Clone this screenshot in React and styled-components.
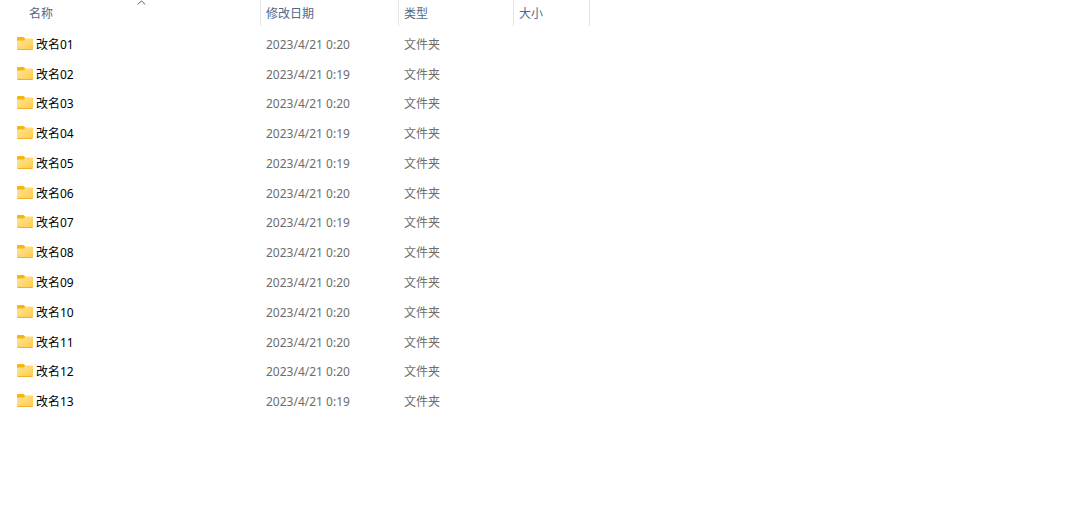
import styled, { createGlobalStyle } from 'styled-components'

const folders = [
  { name: '改名01', date: '2023/4/21 0:20' },
  { name: '改名02', date: '2023/4/21 0:19' },
  { name: '改名03', date: '2023/4/21 0:20' },
  { name: '改名04', date: '2023/4/21 0:19' },
  { name: '改名05', date: '2023/4/21 0:19' },
  { name: '改名06', date: '2023/4/21 0:20' },
  { name: '改名07', date: '2023/4/21 0:19' },
  { name: '改名08', date: '2023/4/21 0:20' },
  { name: '改名09', date: '2023/4/21 0:20' },
  { name: '改名10', date: '2023/4/21 0:20' },
  { name: '改名11', date: '2023/4/21 0:20' },
  { name: '改名12', date: '2023/4/21 0:20' },
  { name: '改名13', date: '2023/4/21 0:19' },
]

const FolderIcon = () => (
  <FolderSvg viewBox="0 0 16 16" aria-hidden="true">
    <defs>
      <linearGradient id="folderFront" x1="0" y1="0" x2="1" y2="1">
        <stop offset="0" stopColor="#ffe496" />
        <stop offset="1" stopColor="#ffcb48" />
      </linearGradient>
    </defs>
    <path
      d="M0 1.3C0 .5.5 0 1.2 0h4.9c.4 0 .7.1 1 .4l1.3 1.4h6.4c.7 0 1.2.5 1.2 1.2V8H0z"
      fill="#f8b50c"
    />
    <path
      d="M0 4.2c0-.5.4-.8.9-.8h5.2c.4 0 .7-.1 1-.4l.6-.5c.3-.3.6-.4 1-.4h6.2c.6 0 1.1.5 1.1 1.1v8.3c0 .7-.5 1.2-1.2 1.2H1.2C.5 12.7 0 12.2 0 11.5z"
      fill="url(#folderFront)"
    />
    <path
      d="M0 11.5c0 .9.5 1.4 1.2 1.4h13.6c.7 0 1.2-.5 1.2-1.4-.2.5-.6.6-1.2.6H1.2c-.6 0-1-.1-1.2-.6z"
      fill="#efb02e"
    />
  </FolderSvg>
)

const App = () => {
  return (
    <>
      <GlobalStyle />
      <FileTable>
        <colgroup>
          <Column $width={261} />
          <Column $width={138} />
          <Column $width={115} />
          <Column $width={76} />
          <col />
        </colgroup>
        <thead>
          <tr>
            <HeadCell scope="col" aria-sort="ascending">
              <HeadLabel $first>
                名称
                <SortArrow viewBox="0 0 9 5" aria-hidden="true">
                  <path d="M.8 4.5 4.5.8l3.7 3.7" fill="none" stroke="#5c5c5c" />
                </SortArrow>
              </HeadLabel>
            </HeadCell>
            <HeadCell scope="col"><HeadLabel>修改日期</HeadLabel></HeadCell>
            <HeadCell scope="col"><HeadLabel>类型</HeadLabel></HeadCell>
            <HeadCell scope="col"><HeadLabel>大小</HeadLabel></HeadCell>
            <td />
          </tr>
        </thead>
        <tbody>
          {folders.map((folder) => (
            <tr key={folder.name}>
              <Cell>
                <FileName>
                  <FolderIcon />
                  {folder.name}
                </FileName>
              </Cell>
              <Cell>{folder.date}</Cell>
              <Cell>文件夹</Cell>
              <Cell />
              <td />
            </tr>
          ))}
        </tbody>
      </FileTable>
    </>
  )
}

export default App

const GlobalStyle = createGlobalStyle`
  body {
    margin: 0;
    background: #fff;
    font-family: "Noto Sans", "Noto Sans CJK SC", sans-serif;
    font-size: 12px;
    line-height: 18px;
  }
`

const FileTable = styled.table`
  width: 100%;
  height: 417px;
  table-layout: fixed;
  border-collapse: collapse;

  th, td {
    padding: 0;
  }
`

const Column = styled.col`
  width: ${({ $width }) => $width}px;
`

const HeadCell = styled.th`
  height: 30px;
  vertical-align: top;
  text-align: left;
  font-weight: 400;
  color: #52678a;
`

const HeadLabel = styled.div`
  position: relative;
  display: flex;
  align-items: center;
  height: 26px;
  box-sizing: border-box;
  margin-left: ${({ $first }) => ($first ? '22px' : '0')};
  padding-top: 1px;
  padding-left: ${({ $first }) => ($first ? '7px' : '5px')};
  border-right: 1px solid #e5e5e5;
`

const SortArrow = styled.svg`
  position: absolute;
  top: 0;
  left: calc(50% - 4px);
  width: 9px;
  height: 5px;
`

const Cell = styled.td`
  && {
    padding-left: 5px;
  }
  color: #6d6d6d;
  white-space: nowrap;
`

const FileName = styled.div`
  display: flex;
  align-items: center;
  gap: 3px;
  padding-left: 12px;
  color: #000;
`

const FolderSvg = styled.svg`
  width: 16px;
  height: 16px;
`
